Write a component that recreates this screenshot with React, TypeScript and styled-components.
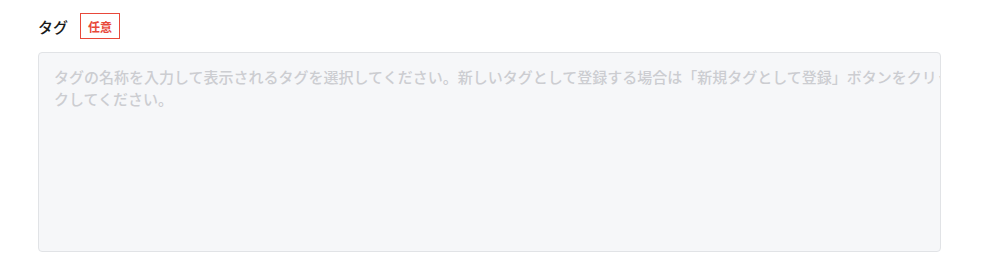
import { createGlobalStyle } from "styled-components";
import styled from "styled-components";

const GlobalStyle = createGlobalStyle`
  html, body {
    margin: 0;
    padding: 0;
    background: #ffffff;
  }
  body {
    font-family: "Noto Sans CJK JP", "Noto Sans", sans-serif;
  }
`;

const Field = styled.div`
  padding: 13px 0 0 38px;
  width: 903px;
`;

const Header = styled.div`
  display: flex;
  align-items: center;
  gap: 12px;
  height: 26px;
`;

const Label = styled.span`
  font-size: 15px;
  font-weight: 500;
  color: #1a1a1a;
`;

const Badge = styled.span`
  display: inline-flex;
  align-items: center;
  justify-content: center;
  height: 26px;
  padding: 0 7px;
  box-sizing: border-box;
  border: 1px solid #e8483a;
  color: #e8483a;
  font-size: 12px;
  font-weight: 700;
`;

const Box = styled.div`
  margin-top: 13px;
  height: 200px;
  box-sizing: border-box;
  background: #f6f7f9;
  border: 1px solid #e1e3e6;
  border-radius: 4px;
  padding: 13px 0 0 15px;
  overflow: hidden;
`;

const Placeholder = styled.span`
  display: block;
  white-space: nowrap;
  font-size: 15px;
  line-height: 22px;
  font-weight: 500;
  color: #cccdd1;
`;

const lines = [
  "タグの名称を入力して表示されるタグを選択してください。新しいタグとして登録する場合は「新規タグとして登録」ボタンをクリッ",
  "クしてください。",
];

export default function App() {
  return (
    <>
      <GlobalStyle />
      <Field>
        <Header>
          <Label>タグ</Label>
          <Badge>任意</Badge>
        </Header>
        <Box>
          {lines.map((line) => (
            <Placeholder key={line}>{line}</Placeholder>
          ))}
        </Box>
      </Field>
    </>
  );
}
